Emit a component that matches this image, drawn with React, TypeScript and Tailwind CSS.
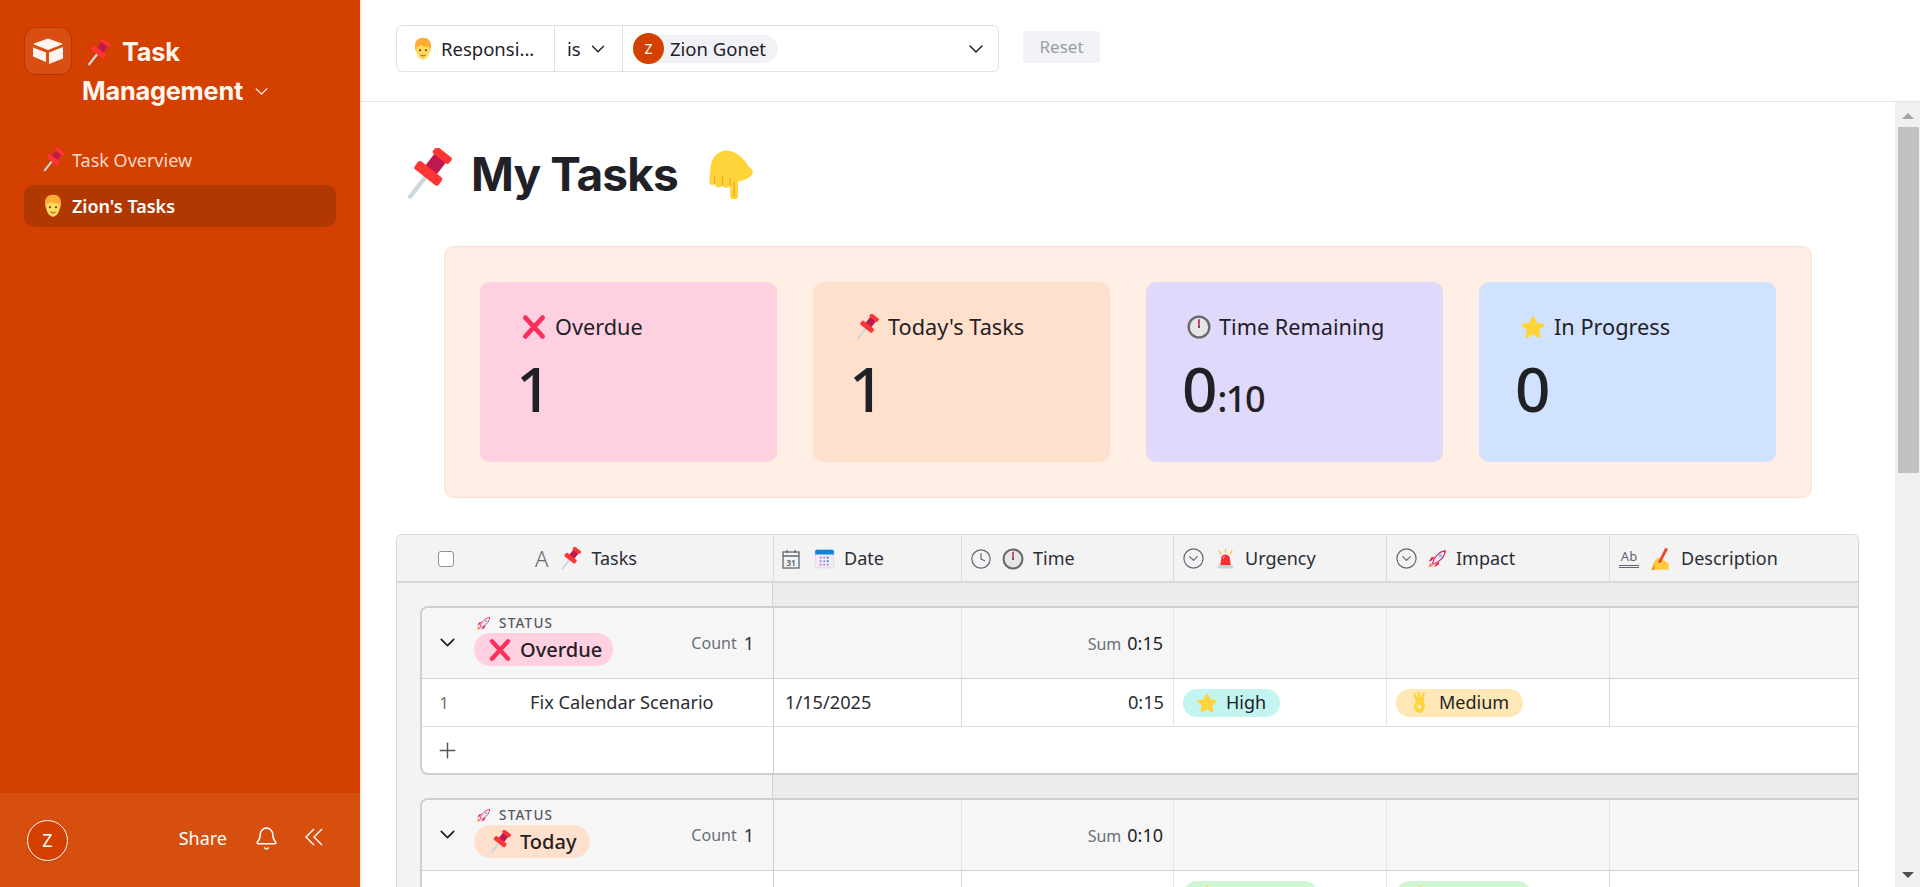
import { Bell, ChevronDown, CircleChevronDown, Clock, Plus } from 'lucide-react';

type IconProps = { className?: string };

// Emoji drawings, all on a 36 box
const Pin = ({ className }: IconProps) => (
  <svg viewBox="0 0 36 36" className={className}>
    <g transform="translate(21 14) rotate(38)">
      <line x1="0" y1="5" x2="0" y2="25" stroke="#ccd6dd" strokeWidth="3" strokeLinecap="round" />
      <rect x="-5" y="-9" width="10" height="11" fill="#be1950" />
      <rect x="-7" y="-14" width="14" height="5.500" rx="1.500" fill="#ff3535" />
      <rect x="-10.500" y="1" width="21" height="7" rx="2" fill="#ff3535" />
    </g>
  </svg>
);

const Face = ({ className }: IconProps) => (
  <svg viewBox="0 0 36 36" className={className}>
    <path d="M18 1C10 1 6 6 6 13c0 3 0 6 2 9h20c2-3 2-6 2-9 0-7-4-12-12-12z" fill="#ffac33" />
    <path d="M8 15c2 0 5-1 6-3 3 2 9 3 14 3v5c0 8-5 14-10 14S8 28 8 20z" fill="#ffdc5d" />
    <circle cx="13.500" cy="20" r="1.500" fill="#662113" />
    <circle cx="22.500" cy="20" r="1.500" fill="#662113" />
    <path d="M14.500 27c2 1.500 5 1.500 7 0" stroke="#c1694f" strokeWidth="1.600" fill="none" strokeLinecap="round" />
  </svg>
);

const Cross = ({ className }: IconProps) => (
  <svg viewBox="0 0 36 36" className={className}>
    <path d="M6 5l24 26M30 5L6 31" stroke="#f92f5c" strokeWidth="6.500" strokeLinecap="round" fill="none" />
  </svg>
);

const Star = ({ className }: IconProps) => (
  <svg viewBox="0 0 36 36" className={className}>
    <path
      d="M18 5l4 9 9.500 1-7 6.500 2 9.500-8.500-5-8.500 5 2-9.500-7-6.500 9.500-1z"
      fill="#ffd43b"
      stroke="#ffd43b"
      strokeWidth="4"
      strokeLinejoin="round"
    />
  </svg>
);

const Stopwatch = ({ className }: IconProps) => (
  <svg viewBox="0 0 36 36" className={className}>
    <circle cx="18" cy="18" r="15.500" fill="#e6e6e6" stroke="#66696d" strokeWidth="3.500" />
    <path d="M18 18V7" stroke="#c4103f" strokeWidth="2.200" strokeLinecap="round" />
    <circle cx="18" cy="18" r="1.500" fill="#444" />
  </svg>
);

const Rocket = ({ className }: IconProps) => (
  <svg viewBox="0 0 36 36" className={className}>
    <path d="M3 33l2-8 4 2 2 4z" fill="#ff8a5c" />
    <path d="M8 21l-5 2 5-8 6-1zM15 28l-2 5 8-5 1-6z" fill="#e0245e" />
    <path d="M10 26C12 15 21 5 33 3c-1 12-11 21-22 24z" fill="#fdeef2" stroke="#e0245e" strokeWidth="2" strokeLinejoin="round" />
    <circle cx="24" cy="12" r="3.500" fill="#88c9f9" />
  </svg>
);

const PointDown = ({ className }: IconProps) => (
  <svg viewBox="0 0 36 36" className={className}>
    <path
      d="M14 0C8 0 3 5 2 12L1 24c0 3 3 3 4 1.500 0 3 4 3.500 6 1.500 1 2 4 2 6 .5v7c0 2.500 1.500 3 3 3s3-.5 3-3V24l3-1c4-1 7-3 8-5 1-3-1-4-3-6C29 8 22 0 14 0z"
      fill="#ffd43b"
    />
    <path d="M5 19v6M11 20v7M17 21v6M20 24v11" stroke="#f4a623" strokeWidth="1" fill="none" />
  </svg>
);

const Siren = ({ className }: IconProps) => (
  <svg viewBox="0 0 36 36" className={className}>
    <path d="M18 2v5M7 5l3 5M29 5l-3 5" stroke="#ffc83d" strokeWidth="2.400" strokeLinecap="round" />
    <rect x="5" y="29" width="26" height="6" rx="2" fill="#ccd0d4" />
    <path d="M9 29l2-13c.5-3 4-5 7-5s6.500 2 7 5l2 13z" fill="#f92f2f" />
    <path d="M14 18c0-2 1-3 3-3" stroke="#ff9a9a" strokeWidth="2" fill="none" strokeLinecap="round" />
  </svg>
);

const Writing = ({ className }: IconProps) => (
  <svg viewBox="0 0 36 36" className={className}>
    <path d="M8 34c-3-8 2-15 8-18l8 4 7 5v9z" fill="#ffcb3d" />
    <path d="M26 1l4 2-11 21-4-1z" fill="#f0442c" />
    <path d="M5 34c2-4 4-6 5-8v8z" fill="#f4900c" />
  </svg>
);

const OkHand = ({ className }: IconProps) => (
  <svg viewBox="0 0 36 36" className={className}>
    <path d="M9 3l3 8M16 1l1 9M24 3l-2 8" stroke="#ffd43b" strokeWidth="4" strokeLinecap="round" />
    <path d="M10 10h14c1 2 1 4 0 6 3 4 3 11-1 15-3 4-9 4-12 0-4-5-3-12 1-15-2-2-2-4-2-6z" fill="#ffd43b" />
    <circle cx="17" cy="24" r="3" fill="#fff3c9" />
  </svg>
);

const CalendarEmoji = ({ className }: IconProps) => (
  <svg viewBox="0 0 36 36" className={className}>
    <rect x="2" y="3" width="32" height="31" rx="3" fill="#f1eaf5" stroke="#d9cde2" />
    <path d="M2 11V6a3 3 0 0 1 3-3h26a3 3 0 0 1 3 3v5z" fill="#0f83d6" />
    <g fill="#a77fc0">
      <rect x="10" y="15" width="3" height="3" />
      <rect x="16" y="15" width="3" height="3" />
      <rect x="22" y="15" width="3" height="3" fill="#0f83d6" />
      <rect x="10" y="21" width="3" height="3" />
      <rect x="16" y="21" width="3" height="3" />
      <rect x="22" y="21" width="3" height="3" fill="#0f83d6" />
      <rect x="10" y="27" width="3" height="3" />
      <rect x="16" y="27" width="3" height="3" />
      <rect x="22" y="27" width="3" height="3" />
    </g>
  </svg>
);

const CalendarField = ({ className }: IconProps) => (
  <svg viewBox="0 0 18 20" className={className}>
    <rect x="1" y="3" width="16" height="16" fill="none" stroke="#5f6570" strokeWidth="1.300" />
    <path d="M1 7h16M5 1v3M13 1v3" stroke="#5f6570" strokeWidth="1.300" />
    <text x="9" y="16.500" textAnchor="middle" fontSize="8" fontWeight="700" fill="#5f6570" fontFamily="'Noto Sans', sans-serif">31</text>
  </svg>
);

const Logo = () => (
  <svg viewBox="0 0 32 27" className="w-8 h-[27px]" fill="#fff5ee">
    <path d="M16 1l14 5-14 5.500L2 6z" stroke="#fff5ee" strokeLinejoin="round" />
    <path d="M1 9.500l13 5V24L1 18.500z" />
    <path d="M17 14.500l14-5.500v11.500L17 26z" />
  </svg>
);

const stats = [
  { icon: <Cross className="w-[26px] h-[26px]" />, label: 'Overdue', value: '1', bg: 'bg-[#ffd1e0]' },
  { icon: <Pin className="w-[26px] h-[26px]" />, label: "Today's Tasks", value: '1', bg: 'bg-[#ffe0cc]' },
  { icon: <Stopwatch className="w-[24px] h-[24px]" />, label: 'Time Remaining', value: '0', small: ':10', bg: 'bg-[#e0d9fb]' },
  { icon: <Star className="w-[26px] h-[26px]" />, label: 'In Progress', value: '0', bg: 'bg-[#d0e2fd]' },
];

const StatCard = ({ icon, label, value, small, bg }: (typeof stats)[number]) => (
  <div className={`w-[297px] h-[180px] rounded-[10px] pl-[36px] pt-[30px] ${bg}`}>
    <div className="flex items-center gap-[8px] pl-[5px] text-[21.700px] leading-[30px] text-[#1f2127]">
      {icon}
      {label}
    </div>
    <div className="mt-[9px] text-[62px] leading-[74px] text-[#1f2127] font-medium">
      {value}
      {small && <span className="text-[36px] tracking-[-0.04em]">{small}</span>}
    </div>
  </div>
);

const HeaderCell = ({ icon, emoji, label, w }: { icon: React.ReactNode; emoji: React.ReactNode; label: string; w: string }) => (
  <div className={`flex items-center gap-[8px] pl-[8px] border-l border-[#dcdcdc] ${w}`}>
    {icon}
    {emoji}
    <span className="ml-[1px]">{label}</span>
  </div>
);

const Pill = ({ bg, icon, label }: { bg: string; icon: React.ReactNode; label: string }) => (
  <span className={`inline-flex items-center gap-[8px] h-[28px] pl-[13px] pr-[14px] rounded-full text-[18px] text-[#1f2127] whitespace-nowrap overflow-hidden ${bg}`}>
    {icon}
    {label}
  </span>
);

const cols = ['w-[188px]', 'w-[212px]', 'w-[213px]', 'w-[223px]', 'w-[247px]'];

const Band = ({ h }: { h: string }) => (
  <div className={`flex ${h}`}>
    <div className="w-[376px] bg-[#f3f3f3] border-r border-[#cfcfcf]" />
    <div className="flex-1 bg-[#ebebeb]" />
  </div>
);

const Group = ({
  icon,
  label,
  pillBg,
  pillW,
  sum,
  row,
  addRow,
}: {
  icon: React.ReactNode;
  label: string;
  pillBg: string;
  pillW: string;
  sum: string;
  row: React.ReactNode;
  addRow?: boolean;
}) => (
  <div className="flex bg-[#f3f3f3] pl-[23px]">
    <div className="flex-1 border-l-2 border-t-2 border-[#cfcfcf] rounded-tl-[8px] rounded-bl-[8px] bg-white border-b-2 overflow-hidden">
      <div className="flex h-[71px] bg-[#f6f6f6] border-b border-[#d0d0d0]">
        <div className="w-[352px] flex border-r border-[#cfcfcf]">
          <div className="w-[52px] pr-[2px] flex items-center justify-center">
            <ChevronDown size={25} strokeWidth={1.7} className="text-[#1f2127] mb-[2px]" />
          </div>
          <div className="flex-1">
            <div className="flex items-center gap-[8px] h-[25px] pt-[5px] pl-[2px]">
              <Rocket className="w-[15px] h-[15px]" />
              <span className="text-[13.500px] font-medium tracking-[0.09em] text-[#55585f]">STATUS</span>
            </div>
            <span className={`inline-flex items-center gap-[8px] h-[33px] pl-[14px] rounded-full text-[20px] font-medium text-[#1f2127] ${pillBg} ${pillW}`}>
              {icon}
              {label}
            </span>
          </div>
          <div className="flex items-center gap-[7px] pr-[19px] text-[#6b6e75]">
            <span className="text-[16px]">Count</span>
            <span className="text-[18px] text-[#333]">1</span>
          </div>
        </div>
        <div className={`${cols[0]} border-r border-[#e4e4e4]`} />
        <div className={`${cols[1]} border-r border-[#e4e4e4] flex items-center justify-end gap-[6px] pr-[10px] pt-[1px]`}>
          <span className="text-[16px] text-[#6b6e75]">Sum</span>
          <span className="text-[18px] text-[#1f2127]">{sum}</span>
        </div>
        <div className={`${cols[2]} border-r border-[#e4e4e4]`} />
        <div className={`${cols[3]} border-r border-[#e4e4e4]`} />
        <div className="flex-1" />
      </div>
      {row}
      {addRow && (
        <div className="flex h-[46px]">
          <div className="w-[352px] border-r border-[#cfcfcf] flex items-center pl-[13px]">
            <Plus size={25} strokeWidth={1.4} className="text-[#555]" />
          </div>
        </div>
      )}
    </div>
  </div>
);

const RowCells = ({ index, task, date, time, urgency, impact }: { index?: string; task?: string; date?: string; time?: string; urgency: React.ReactNode; impact: React.ReactNode }) => (
  <div className="flex h-[48px] border-b border-[#e0e0e0] text-[18.200px] text-[#2b2d33]">
    <div className="w-[352px] flex items-center pt-[1px] border-r border-[#cfcfcf]">
      <span className="w-[44px] text-center text-[16px] text-[#6b6e75]">{index}</span>
      <span className="ml-[64px]">{task}</span>
    </div>
    <div className={`${cols[0]} flex items-center pt-[1px] pl-[11px] border-r border-[#d8d8d8]`}>{date}</div>
    <div className={`${cols[1]} flex items-center pt-[1px] justify-end pr-[9px] border-r border-[#e4e4e4]`}>{time}</div>
    <div className={`${cols[2]} flex items-center pl-[9px] border-r border-[#e4e4e4]`}>{urgency}</div>
    <div className={`${cols[3]} flex items-center pl-[9px] border-r border-[#d8d8d8]`}>{impact}</div>
    <div className="flex-1" />
  </div>
);

const Scrollbar = () => (
  <div className="w-[25px] bg-[#f0f0f0] flex flex-col items-center pl-[1px]">
    <div className="h-[25px] flex items-center justify-center">
      <div className="w-0 h-0 border-x-[6px] border-x-transparent border-b-[6px] border-b-[#a3a3a3] mt-[2px]" />
    </div>
    <div className="w-[21px] h-[346px] bg-[#c1c1c1]" />
    <div className="flex-1" />
    <div className="h-[25px] flex items-center justify-center">
      <div className="w-0 h-0 border-x-[6px] border-x-transparent border-t-[6px] border-t-[#505050]" />
    </div>
  </div>
);

export default function App() {
  return (
    <div className="flex h-[887px] overflow-hidden bg-white font-['Noto_Sans',sans-serif] text-[#1f2127]">
      <aside className="w-[360px] shrink-0 flex flex-col bg-[#d44000] shadow-[1px_0_2px_rgba(0,0,0,0.15)]">
        <div className="flex-1 px-[24px] pt-[27px]">
          <div className="flex">
            <div className="w-[48px] h-[48px] shrink-0 rounded-[12px] bg-[#d94f12] border border-[#b13800] flex items-center justify-center">
              <Logo />
            </div>
            <div className="ml-[10px] font-['Inter',sans-serif] font-bold text-[25.400px] leading-[38.500px] text-[#fff6f0] pt-[6px] tracking-[-0.01em]">
              <div className="flex items-center gap-[10px] ml-[3px]">
                <Pin className="w-[27px] h-[27px]" />
                Task
              </div>
              <div className="flex items-center gap-[8px]">
                Management
                <ChevronDown size={21} strokeWidth={1.6} className="mt-[2px]" />
              </div>
            </div>
          </div>
          <nav className="mt-[29px] text-[18px]">
            <div className="flex items-center gap-[7px] h-[42px] mb-[4px] pl-[17px] text-[#fbd9c8]">
              <Pin className="w-[24px] h-[24px]" />
              Task Overview
            </div>
            <div className="flex items-center gap-[7px] h-[42px] pl-[17px] rounded-[10px] bg-[#b13800] font-semibold text-white">
              <Face className="w-[24px] h-[24px]" />
              Zion's Tasks
            </div>
          </nav>
        </div>
        <div className="h-[95px] bg-[#d74f0f] border-t border-[#cc4507] flex items-center pl-[27px] pr-[37px]">
          <div className="w-[41px] h-[41px] rounded-full border border-white bg-[#d44000] flex items-center justify-center text-[18px] text-white shadow-sm">
            Z
          </div>
          <span className="ml-auto text-[18px] text-white mb-[4px]">Share</span>
          <Bell size={25} strokeWidth={1.4} className="ml-[27px] text-white mb-[3px]" />
          <svg viewBox="0 0 18 18" className="ml-[26px] w-[18px] h-[18px] mb-[6px]" fill="none" stroke="#ffffff" strokeWidth="1.400">
            <path d="M9 1L1 9l8 8M17 1L9 9l8 8" />
          </svg>
        </div>
      </aside>

      <main className="flex-1 flex flex-col min-w-0">
        <header className="h-[102px] shrink-0 border-b border-[#e3e3e3] flex items-center pl-[36px] pb-[4px]">
          <div className="flex w-[603px] h-[47px] rounded-[6px] border border-[#e1e1e4] text-[18.500px]">
            <div className="w-[158px] flex items-center gap-[6px] pl-[14px] border-r border-[#e1e1e4]">
              <Face className="w-[24px] h-[24px]" />
              Responsi...
            </div>
            <div className="w-[68px] flex items-center pl-[12px] gap-[6px] border-r border-[#e1e1e4]">
              is
              <ChevronDown size={22} strokeWidth={1.5} />
            </div>
            <div className="flex-1 flex items-center pl-[10px] pr-[10px]">
              <div className="flex items-center h-[28px] rounded-full bg-[#f1f2f6] pr-[12px]">
                <span className="w-[31px] h-[31px] rounded-full bg-[#d44000] text-white text-[14px] flex items-center justify-center">Z</span>
                <span className="ml-[6px]">Zion Gonet</span>
              </div>
              <ChevronDown size={24} strokeWidth={1.5} className="ml-auto" />
            </div>
          </div>
          <div className="ml-[24px] mb-[4px] w-[77px] h-[32px] rounded-[4px] bg-[#f2f3f7] text-[#9a9ea5] text-[17px] flex items-center justify-center">Reset</div>
        </header>

        <div className="flex-1 flex min-h-0">
          <div className="flex-1 min-w-0 overflow-hidden pl-[36px]">
            <div className="flex items-center h-[48px] mt-[48px] pl-[6px] font-['Inter',sans-serif] font-bold text-[46px] tracking-[-0.02em] text-[#1f2127]">
              <Pin className="w-[52px] h-[52px]" />
              <span className="ml-[17px]">My Tasks</span>
              <PointDown className="ml-[30px] w-[47px] h-[50px]" />
            </div>

            <div className="ml-[48px] mt-[48px] w-[1368px] h-[252px] rounded-[10px] bg-[#ffeee3] border border-[#fedfcf] flex items-center pl-[35px] gap-[36px]">
              {stats.map((s) => (
                <StatCard key={s.label} {...s} />
              ))}
            </div>

            <div className="mt-[36px] w-[1463px] border-x border-t border-[#d6d6d6] rounded-t-[6px] overflow-hidden">
              <div className="flex h-[48px] bg-[#f3f3f3] border-b-2 border-[#d8d8d8] text-[18px] text-[#2b2d33] pt-[1px]">
                <div className="w-[376px] flex items-center">
                  <span className="ml-[41px] w-[16px] h-[16px] rounded-[3px] border border-[#8d9096] bg-white" />
                  <span className="ml-[81px] text-[22px] font-light text-[#5f6570]">A</span>
                  <Pin className="ml-[11px] w-[23px] h-[23px]" />
                  <span className="ml-[9px]">Tasks</span>
                </div>
                <HeaderCell w={cols[0]} label="Date" icon={<CalendarField className="w-[18px] h-[20px]" />} emoji={<CalendarEmoji className="ml-[6px] w-[21px] h-[21px]" />} />
                <HeaderCell w={cols[1]} label="Time" icon={<Clock size={22} strokeWidth={1.3} className="text-[#5f6570]" />} emoji={<Stopwatch className="ml-[2px] w-[22px] h-[22px]" />} />
                <HeaderCell w={cols[2]} label="Urgency" icon={<CircleChevronDown size={23} strokeWidth={1.2} className="text-[#5f6570]" />} emoji={<Siren className="ml-[2px] w-[21px] h-[21px]" />} />
                <HeaderCell w={cols[3]} label="Impact" icon={<CircleChevronDown size={23} strokeWidth={1.2} className="text-[#5f6570]" />} emoji={<Rocket className="ml-[1px] w-[20px] h-[20px]" />} />
                <div className="flex-1 flex items-center gap-[9px] pl-[9px] border-l border-[#dcdcdc]">
                  <div className="w-[20px] text-[#5f6570] leading-none text-center">
                    <div className="text-[13px] leading-[13px]">Ab</div>
                    <div className="mt-[2px] border-t border-[#5f6570] h-[3px] border-b" />
                  </div>
                  <Writing className="w-[24px] h-[24px]" />
                  <span>Description</span>
                </div>
              </div>

              <Band h="h-[23px]" />
              <Group
                icon={<Cross className="w-[24px] h-[24px]" />}
                label="Overdue"
                pillBg="bg-[#ffd1e0]"
                pillW="w-[139px]"
                sum="0:15"
                addRow
                row={
                  <RowCells
                    index="1"
                    task="Fix Calendar Scenario"
                    date="1/15/2025"
                    time="0:15"
                    urgency={<Pill bg="bg-[#c2f5ef]" icon={<Star className="w-[22px] h-[22px]" />} label="High" />}
                    impact={<Pill bg="bg-[#ffe8b5]" icon={<OkHand className="w-[22px] h-[22px]" />} label="Medium" />}
                  />
                }
              />
              <Band h="h-[23px]" />
              <Group
                icon={<Pin className="w-[24px] h-[24px]" />}
                label="Today"
                pillBg="bg-[#ffe0cc]"
                pillW="w-[116px]"
                sum="0:10"
                row={
                  <RowCells
                    urgency={<Pill bg="bg-[#cff5d1] w-[135px]" icon={<Star className="w-[22px] h-[22px]" />} label="Minimal" />}
                    impact={<Pill bg="bg-[#cff5d1] w-[135px]" icon={<Star className="w-[22px] h-[22px]" />} label="Minimal" />}
                  />
                }
              />
            </div>
          </div>
          <Scrollbar />
        </div>
      </main>
    </div>
  );
}
